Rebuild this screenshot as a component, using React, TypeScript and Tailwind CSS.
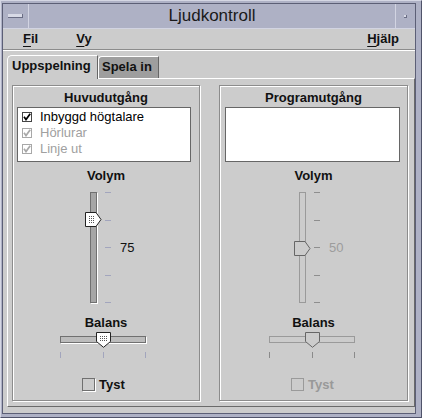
import React from "react";

const SANS = "font-['Liberation_Sans',Arial,sans-serif]";

function ListCheck({ label, disabled }: { label: string; disabled?: boolean }) {
  return (
    <div className="flex h-[16px] items-center pl-[4px]">
      <div
        className={`flex h-[10px] w-[10px] items-center justify-center border bg-white ${
          disabled ? "border-[#a8a8a8]" : "border-[#444]"
        }`}
      >
        <svg width="8" height="8" viewBox="0 0 8 8">
          <path
            d="M1 3.8 L3 6.6 L7.2 0.8"
            fill="none"
            stroke={disabled ? "#a8a8a8" : "#000"}
            strokeWidth="1.7"
          />
        </svg>
      </div>
      <span className={`ml-[8px] text-[13px] leading-[16px] ${disabled ? "text-[#a0a0a0]" : "text-black"}`}>
        {label}
      </span>
    </div>
  );
}

function VThumb({ disabled, id }: { disabled?: boolean; id: string }) {
  return (
    <svg width="17" height="16" viewBox="0 0 17 16">
      <defs>
        <pattern id={id} width="2" height="2" patternUnits="userSpaceOnUse">
          <rect x="0" y="0" width="1" height="1" fill="#555" />
        </pattern>
      </defs>
      <polygon
        points="0.5,0.5 11,0.5 16,7.5 11,14.5 0.5,14.5"
        fill={disabled ? "#cccccc" : "#fff"}
        stroke={disabled ? "#666" : "#222"}
      />
      {!disabled && <rect x="3" y="3" width="7" height="9" fill={`url(#${id})`} />}
    </svg>
  );
}

function HThumb({ disabled, id }: { disabled?: boolean; id: string }) {
  return (
    <svg width="15" height="16" viewBox="0 0 15 16">
      <defs>
        <pattern id={id} width="2" height="2" patternUnits="userSpaceOnUse">
          <rect x="0" y="0" width="1" height="1" fill="#555" />
        </pattern>
      </defs>
      <polygon
        points="0.5,0.5 14.5,0.5 14.5,9.5 7.5,15.3 0.5,9.5"
        fill={disabled ? "#cccccc" : "#fff"}
        stroke={disabled ? "#666" : "#222"}
      />
      {!disabled && <rect x="3" y="3" width="9" height="6" fill={`url(#${id})`} />}
    </svg>
  );
}

function VSlider({ value, disabled, pl }: { value: number; disabled?: boolean; pl: string }) {
  const tick = disabled ? "bg-[#8e8e8e]" : "bg-[#a2a5bd]";
  return (
    <div className={`mt-[7px] flex h-[112px] ${pl}`}>
      <div className="relative flex h-[112px] w-[16px] justify-center pt-px">
        <div
          className={
            disabled
              ? "h-[111px] w-[7px] border border-[#9a9a9a] bg-[#cccccc]"
              : "h-[111px] w-[7px] border border-[#707070] bg-[#a6a6a6] shadow-[1px_1px_0_#fff]"
          }
        />
        <div className={`absolute left-0 ${value === 75 ? "top-[21px]" : "top-[50px]"}`}>
          <VThumb disabled={disabled} id={disabled ? "vs2" : "vs1"} />
        </div>
      </div>
      <div className="ml-[4px] flex h-[112px] w-[6px] flex-col justify-between pt-px">
        {[0, 1, 2, 3, 4].map((i) => (
          <div key={i} className={`h-px w-[6px] ${tick}`} />
        ))}
      </div>
      <span
        className={`ml-[9px] mt-[49px] text-[13px] leading-[16px] ${disabled ? "text-[#9c9c9c]" : "text-[#111]"}`}
      >
        {value}
      </span>
    </div>
  );
}

function HSlider({ disabled, ml }: { disabled?: boolean; ml: string }) {
  const tick = disabled ? "bg-[#8a8a8a]" : "bg-[#a2a5bd]";
  return (
    <div className={`relative mt-px h-[27px] w-[86px] ${ml}`}>
      <div
        className={
          disabled
            ? "mt-[4px] h-[7px] w-[86px] border border-[#9a9a9a] bg-[#cccccc]"
            : "mt-[4px] h-[7px] w-[86px] border border-[#707070] bg-[#bcbcbc] shadow-[1px_1px_0_#fff]"
        }
      />
      <div className="mt-[9px] flex h-[6px] justify-between">
        {[0, 1, 2].map((i) => (
          <div key={i} className={`h-[6px] w-px ${tick}`} />
        ))}
      </div>
      <div className="absolute left-[36px] top-0">
        <HThumb disabled={disabled} id={disabled ? "hs2" : "hs1"} />
      </div>
    </div>
  );
}

function Mute({ disabled, ml }: { disabled?: boolean; ml: string }) {
  return (
    <div className={`mt-[19px] flex h-[13px] items-center ${ml}`}>
      <div
        className={
          disabled
            ? "h-[13px] w-[13px] border border-[#9a9a9a] bg-[#cccccc]"
            : "h-[13px] w-[13px] border border-[#707070] bg-[#cccccc] shadow-[1px_1px_0_#fff]"
        }
      />
      <span className={`ml-[4px] text-[13px] font-bold leading-[16px] ${disabled ? "text-[#999]" : "text-[#111]"}`}>
        Tyst
      </span>
    </div>
  );
}

function Group({ title, width, children }: { title: string; width: string; children: React.ReactNode }) {
  return (
    <div
      className={`flex h-[316px] ${width} flex-col border border-[#8c8c8c] shadow-[inset_1px_1px_0_#fff,1px_1px_0_#fff]`}
    >
      <div className="mt-[4px] h-[16px] text-center text-[13px] font-bold leading-[16px] text-[#111]">{title}</div>
      {children}
    </div>
  );
}

function Label({ text }: { text: string }) {
  return <div className="h-[16px] text-center text-[13px] font-bold leading-[16px] text-[#111]">{text}</div>;
}

function MenuItem({ first, rest, className }: { first: string; rest: string; className?: string }) {
  return (
    <span className={`text-[13px] font-bold leading-[16px] text-[#111] ${className ?? ""}`}>
      <span className="underline decoration-1 underline-offset-[3px]">{first}</span>
      {rest}
    </span>
  );
}

export default function App() {
  return (
    <div
      className={`h-[418px] w-[422px] border border-b-[#50536a] border-l-[#d5d7e4] border-r-[#50536a] border-t-[#d5d7e4] bg-[#aeb1c5] pl-px pt-[2px] ${SANS}`}
    >
      <div className="flex h-[411px] w-[414px] flex-col border border-[#5c5f76] bg-[#cccccc]">
        {/* title bar */}
        <div className="flex h-[25px] border-b border-[#d2d4e2] bg-[#aeb1c5]">
          <div className="flex w-[26px] items-center justify-center border-r border-[#d2d4e2]">
            <div className="h-[4px] w-[15px] border-b border-r border-b-[#6a6d84] border-r-[#6a6d84] bg-[#d8dae6]" />
          </div>
          <div className="flex-1 text-center text-[17px] leading-[24px] text-[#1a1a1a]">Ljudkontroll</div>
          <div className="flex w-[20px] items-center justify-center border-l border-[#d2d4e2]">
            <div className="h-[3px] w-[3px] border-b border-r border-b-[#6a6d84] border-r-[#6a6d84] bg-[#d8dae6]" />
          </div>
        </div>

        {/* menu bar */}
        <div className="flex h-[20px] items-center pl-[20px] pr-[16px]">
          <MenuItem first="F" rest="il" />
          <MenuItem first="V" rest="y" className="ml-[38px]" />
          <MenuItem first="H" rest="jälp" className="ml-auto" />
        </div>
        <div className="h-px bg-[#8c8c8c]" />
        <div className="h-px bg-white" />

        {/* tabs */}
        <div className="flex h-[27px] items-end pl-[4px]">
          <div className="relative z-10 -mb-px h-[24px] w-[91px] rounded-tl-[5px] border-l border-r border-t border-l-white border-r-[#666] border-t-white bg-[#cccccc] pl-[4px] text-[13px] font-bold leading-[20px] text-[#111]">
            Uppspelning
          </div>
          <div className="h-[22px] w-[61px] rounded-tl-[4px] border-l border-r border-t border-l-white border-r-[#666] border-t-white bg-[#9e9e9e] pl-[3px] text-[13px] font-bold leading-[19px] text-[#111]">
            Spela in
          </div>
        </div>

        {/* tab panel */}
        <div className="ml-[4px] flex h-[329px] w-[408px] gap-[19px] border border-b-[#6a6a6a] border-l-white border-r-[#6a6a6a] border-t-white pl-[4px] pt-[6px]">
          <Group title="Huvudutgång" width="w-[188px]">
            <div className="ml-[4px] mt-px h-[55px] w-[174px] border border-[#666] bg-white pt-px">
              <ListCheck label="Inbyggd högtalare" />
              <ListCheck label="Hörlurar" disabled />
              <ListCheck label="Linje ut" disabled />
            </div>
            <div className="mt-[6px]">
              <Label text="Volym" />
            </div>
            <VSlider value={75} pl="pl-[72px]" />
            <div className="mt-[12px]">
              <Label text="Balans" />
            </div>
            <HSlider ml="ml-[47px]" />
            <Mute ml="ml-[69px]" />
          </Group>

          <Group title="Programutgång" width="w-[189px]">
            <div className="ml-[5px] mt-px h-[55px] w-[175px] border border-[#666] bg-white" />
            <div className="mt-[6px]">
              <Label text="Volym" />
            </div>
            <VSlider value={50} disabled pl="pl-[74px]" />
            <div className="mt-[12px]">
              <Label text="Balans" />
            </div>
            <HSlider disabled ml="ml-[49px]" />
            <Mute disabled ml="ml-[71px]" />
          </Group>
        </div>
      </div>
    </div>
  );
}
